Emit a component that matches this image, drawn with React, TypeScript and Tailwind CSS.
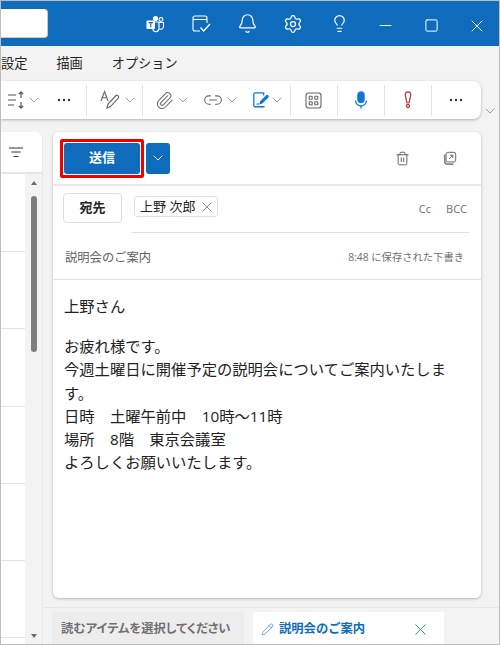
import { Bell, ChevronDown, Lightbulb, Link2, Minus, Paperclip, Pencil, Settings, Square, Trash2, X } from "lucide-react";

const Chev = () => (
  <ChevronDown size={16} strokeWidth={1} className="-mx-[2px] text-[#707070]" />
);

const Dots = () => (
  <svg width="14" height="4" viewBox="0 0 14 4">
    <circle cx="2" cy="2" r="1.2" fill="#333" />
    <circle cx="7" cy="2" r="1.2" fill="#333" />
    <circle cx="12" cy="2" r="1.2" fill="#333" />
  </svg>
);

const Sep = () => <div className="h-[31px] w-px bg-[#e3e3e3]" />;

const TeamsIcon = () => (
  <svg width="20" height="20" viewBox="0 0 20 20" fill="#fff">
    <circle cx="10.5" cy="4.5" r="2.6" />
    <circle cx="16" cy="5.5" r="1.9" fill="none" stroke="#fff" strokeWidth="1.1" />
    <path d="M8 8h6v6.5a3.2 3.2 0 0 1-6 1.5z" fill="none" stroke="#fff" strokeWidth="1.2" />
    <path d="M14.5 8.5H18.500v4a2.800 2.800 0 0 1-4 2.500" fill="none" stroke="#fff" strokeWidth="1.1" />
    <rect x="1.500" y="6.500" width="8.500" height="8.500" rx="1" />
    <path d="M3.500 8.700h4.500M5.750 8.700v4.500" stroke="#0f6cbd" strokeWidth="1.200" />
  </svg>
);

const TodoIcon = () => (
  <svg width="22" height="22" viewBox="0 0 22 22" fill="none" stroke="#fff" strokeWidth="1.1">
    <path d="M10 18H5a2 2 0 0 1-2-2V5a2 2 0 0 1 2-2h10a2 2 0 0 1 2 2v5" />
    <path d="M3 6.500h14" />
    <path d="M10.500 14.500l3.200 3.500 6.300-7" strokeWidth="1.400" />
  </svg>
);

const ListSortIcon = () => (
  <svg width="20" height="18" viewBox="0 0 20 18" fill="none" stroke="#555" strokeWidth="1.200">
    <path d="M1 4h8M1 9h8M1 14h6" />
    <path d="M14 1v6M11.800 3l2.200-2 2.200 2M14 11v6M11.800 15l2.200 2 2.200-2" />
  </svg>
);

const FormatIcon = () => (
  <svg width="20" height="20" viewBox="0 0 20 20" fill="none" stroke="#666" strokeWidth="1.100">
    <path d="M1 11L4.500 1.500 8 11M2.300 7.800h4.500" />
    <path d="M7 18l1-4 8-8.500c1-1 3.500 1 2.500 2.300L10.500 16.500z" />
  </svg>
);

const NoteIcon = () => (
  <svg width="18" height="18" viewBox="0 0 20 20" fill="none">
    <path d="M14 17.500H3.500a1.500 1.500 0 0 1-1.500-1.500V3.500A1.500 1.500 0 0 1 3.500 2H13v3" stroke="#0f78d4" strokeWidth="1.400" />
    <path d="M8 15l1-3.500 7-7c1-1 3.500 1 2.500 2.500l-7 7z" fill="#0f78d4" />
    <path d="M5 14.500h3" stroke="#0f78d4" strokeWidth="1.200" />
  </svg>
);

const GridIcon = () => (
  <svg width="17" height="17" viewBox="0 0 17 17" fill="none" stroke="#666" strokeWidth="1.100">
    <rect x="1" y="1" width="15" height="15" rx="2.500" />
    <rect x="4.200" y="4.200" width="3" height="3" rx="0.500" />
    <rect x="9.800" y="4.200" width="3" height="3" rx="0.500" />
    <rect x="4.200" y="9.800" width="3" height="3" rx="0.500" />
    <rect x="9.800" y="9.800" width="3" height="3" rx="0.500" />
  </svg>
);

const MicIcon = () => (
  <svg width="18" height="18" viewBox="0 0 18 18" fill="none" stroke="#0f78d4">
    <rect x="5.500" y="0.500" width="7" height="11.500" rx="3.500" fill="#0f78d4" strokeWidth="0.500" />
    <path d="M3.500 9.500a5.500 5.500 0 0 0 11 0M9 15v2.500" strokeWidth="1.300" />
  </svg>
);

const ImportantIcon = () => (
  <svg width="10" height="18" viewBox="0 0 10 18" fill="none" stroke="#c03a48" strokeWidth="1.300">
    <path d="M5 1C3 1 2 2.200 2.300 4l1.400 7.200c.2 1 2.400 1 2.600 0L7.700 4C8 2.200 7 1 5 1z" />
    <circle cx="5" cy="15" r="1.500" />
  </svg>
);

const PopoutIcon = () => (
  <svg width="14" height="14" viewBox="0 0 16 16" fill="none">
    <path d="M2 4v8a3 3 0 0 0 3 3h7" stroke="#8a8a8a" strokeWidth="2" />
    <rect x="3.500" y="1.500" width="11" height="11" rx="2" stroke="#666" strokeWidth="1.100" fill="#fff" />
    <path d="M7 9l4-4M8 4.800h3.200V8" stroke="#555" strokeWidth="1" />
  </svg>
);

const FilterIcon = () => (
  <svg width="14" height="11" viewBox="0 0 14 11" stroke="#333" strokeWidth="1">
    <path d="M0 1h14M2.500 5h9M4.500 9.500h5" />
  </svg>
);

const rows = ["h-[78px]", "h-[77px]", "h-[78px]", "h-[77px]", "h-[77px]", "h-[77px]"];

export default function App() {
  return (
    <div className="flex h-[645px] w-[500px] flex-col overflow-hidden border border-[#bdbdbd] bg-[#f3f3f3] font-['Open_Sans','Noto_Sans_CJK_JP',sans-serif] text-[#242424]">
      <header className="flex h-[45px] shrink-0 items-center justify-between bg-[#0f6cbd]">
        <div className="h-[29px] w-[47px] rounded-r-[4px] border-b border-r border-[#c9c9c9] bg-white" />
        <div className="-mr-px flex items-center text-white">
          <div className="flex w-[46px] justify-center"><TeamsIcon /></div>
          <div className="flex w-[46px] justify-center"><TodoIcon /></div>
          <div className="flex w-[46px] justify-center"><Bell size={21} strokeWidth={1.4} /></div>
          <div className="flex w-[46px] justify-center"><Settings size={20} strokeWidth={1.5} /></div>
          <div className="flex w-[46px] justify-center"><Lightbulb size={19} strokeWidth={1.5} /></div>
          <div className="mt-[4px] flex w-[46px] justify-center"><Minus size={19} strokeWidth={1.2} /></div>
          <div className="mt-[4px] flex w-[46px] justify-center"><Square size={15} strokeWidth={1.6} /></div>
          <div className="mt-[4px] flex w-[46px] justify-center"><X size={20} strokeWidth={1.1} /></div>
        </div>
      </header>

      <nav className="flex h-[35px] shrink-0 items-center gap-[29px] text-[13.200px]">
        <span>設定</span>
        <span>描画</span>
        <span>オプション</span>
      </nav>

      <div className="flex h-[38px] shrink-0 items-start">
        <div className="flex h-[38px] w-[480px] items-center rounded-r-lg bg-white shadow-[0_1px_3px_rgba(0,0,0,0.28)]">
          <div className="ml-[6px]"><ListSortIcon /></div>
          <div className="ml-[1px]"><Chev /></div>
          <div className="ml-[17px] mr-[15px]"><Dots /></div>
          <Sep />
          <div className="ml-[13px]"><FormatIcon /></div>
          <div className="ml-[4px] mr-[6px]"><Chev /></div>
          <Sep />
          <Paperclip size={19} strokeWidth={1.3} className="ml-[12px] -mr-[2px] text-[#666]" />
          <div className="ml-[5px]"><Chev /></div>
          <Link2 size={20} strokeWidth={1.3} className="ml-[14px] -mr-[2px] text-[#666]" />
          <div className="ml-[5px]"><Chev /></div>
          <div className="ml-[14px] mr-[1px]"><NoteIcon /></div>
          <div className="mr-[7px]"><Chev /></div>
          <Sep />
          <div className="ml-[14px] mr-[15px]"><GridIcon /></div>
          <Sep />
          <div className="mx-[14px]"><MicIcon /></div>
          <Sep />
          <div className="mx-[18px]"><ImportantIcon /></div>
          <Sep />
          <div className="ml-[17px]"><Dots /></div>
        </div>
        <div className="ml-[1px] mt-[22px]"><ChevronDown size={16} strokeWidth={1} className="text-[#707070]" /></div>
      </div>

      <main className="mt-[13px] flex min-h-0 flex-1">
        <aside className="flex w-[42px] shrink-0 flex-col overflow-hidden rounded-tr-md border-r border-[#e8e8e8] bg-white">
          <div className="flex h-[42px] shrink-0 items-center justify-end border-b-2 border-[#e6e6e6] pr-[19px]">
            <FilterIcon />
          </div>
          <div className="flex min-h-0 flex-1">
            <div className="min-w-0 flex-1">
              {rows.map((h, i) => (
                <div key={i} className={`${h} border-b border-[#e3e3e3]`} />
              ))}
            </div>
            <div className="flex w-[17px] shrink-0 flex-col items-center bg-[#f3f3f3] pt-[7px] pb-[6px]">
              <div className="h-0 w-0 border-x-[3px] border-b-[4px] border-x-transparent border-b-[#6a6a6a]" />
              <div className="mt-[11px] h-[156px] w-[6px] rounded-[3px] bg-[#7f7f7f]" />
              <div className="flex-1" />
              <div className="h-0 w-0 border-x-[3px] border-t-[4px] border-x-transparent border-t-[#6a6a6a]" />
            </div>
          </div>
        </aside>

        <section className="flex min-w-0 flex-1 flex-col">
          <article className="ml-[10px] flex h-[466px] w-[428px] shrink-0 flex-col rounded-md bg-white shadow-[0_1px_3px_rgba(0,0,0,0.25)]">
            <div className="flex h-[54px] shrink-0 items-center border-b-2 border-[#eaeaea] pl-[7px]">
              <div className="rounded-[2px] border-[3px] border-[#f00000] p-px">
                <button className="flex h-[31px] w-[76px] items-center justify-center rounded-[3px] bg-[#0f6cbd] text-[13px] font-bold text-white">
                  送信
                </button>
              </div>
              <button className="ml-[2px] flex h-[31px] w-[24px] items-center justify-center rounded-[3px] bg-[#0f6cbd]">
                <ChevronDown size={16} strokeWidth={1.4} className="text-white" />
              </button>
              <div className="ml-auto flex items-center gap-[33px] pr-[24px]">
                <Trash2 size={15} strokeWidth={1.4} className="text-[#555]" />
                <PopoutIcon />
              </div>
            </div>

            <div className="flex h-[47px] shrink-0 pl-[10px] pr-[12px]">
              <button className="mt-[7px] flex h-[30px] w-[59px] items-center justify-center rounded-[4px] border border-[#dedede] text-[13px] font-bold">
                宛先
              </button>
              <div className="ml-[10px] flex h-[47px] flex-1 items-start border-b border-[#e0e0e0] pt-[10px]">
                <span className="ml-[2px] flex h-[21px] w-[84px] items-center justify-between rounded-[3px] border border-[#e0e0e0] pl-[5px] pr-[2px] text-[13px]">
                  上野 次郎
                  <X size={16} strokeWidth={1} className="text-[#555]" />
                </span>
                <span className="ml-auto mt-[6px] mr-[1px] text-[11px] leading-[14px] text-[#707070]">Cc</span>
                <span className="ml-[14px] mr-[2px] mt-[6px] text-[11px] leading-[14px] text-[#707070]">BCC</span>
              </div>
            </div>

            <div className="flex h-[47px] shrink-0 items-center justify-between border-b border-[#e3e3e3] pl-[12px] pr-[17px] pt-[4px]">
              <span className="text-[12.300px] text-[#616161]">説明会のご案内</span>
              <span className="text-[10.300px] text-[#707070]">8:48 に保存された下書き</span>
            </div>

            <div className="pl-[11px] pr-[32px] pt-[15px] text-[15.300px] leading-[23.200px] text-[#222]">
              <p>上野さん</p>
              <p className="mt-[17px]">お疲れ様です。</p>
              <p>今週土曜日に開催予定の説明会についてご案内いたします。</p>
              <p>日時　土曜午前中　10時～11時</p>
              <p>場所　8階　東京会議室</p>
              <p>よろしくお願いいたします。</p>
            </div>
          </article>

          <div className="mt-[9px] flex min-h-0 flex-1 gap-[9px] border-t border-[#e6e6e6] pl-[9px] pt-[4px]">
            <div className="flex w-[192px] items-center whitespace-nowrap rounded-t-[2px] bg-[#ededed] pl-[9px] pt-[3px] text-[12.300px] font-bold text-[#707070] [font-feature-settings:'palt']">
              読むアイテムを選択してください
            </div>
            <div className="flex w-[191px] items-center whitespace-nowrap rounded-t-[2px] bg-white pl-[8px] pt-[3px] text-[12.300px] font-bold text-[#0f6cbd]">
              <Pencil size={13} strokeWidth={1.1} />
              <span className="ml-[5px]">説明会のご案内</span>
              <X size={19} strokeWidth={1} className="ml-[46px]" />
            </div>
          </div>
        </section>
      </main>
    </div>
  );
}
